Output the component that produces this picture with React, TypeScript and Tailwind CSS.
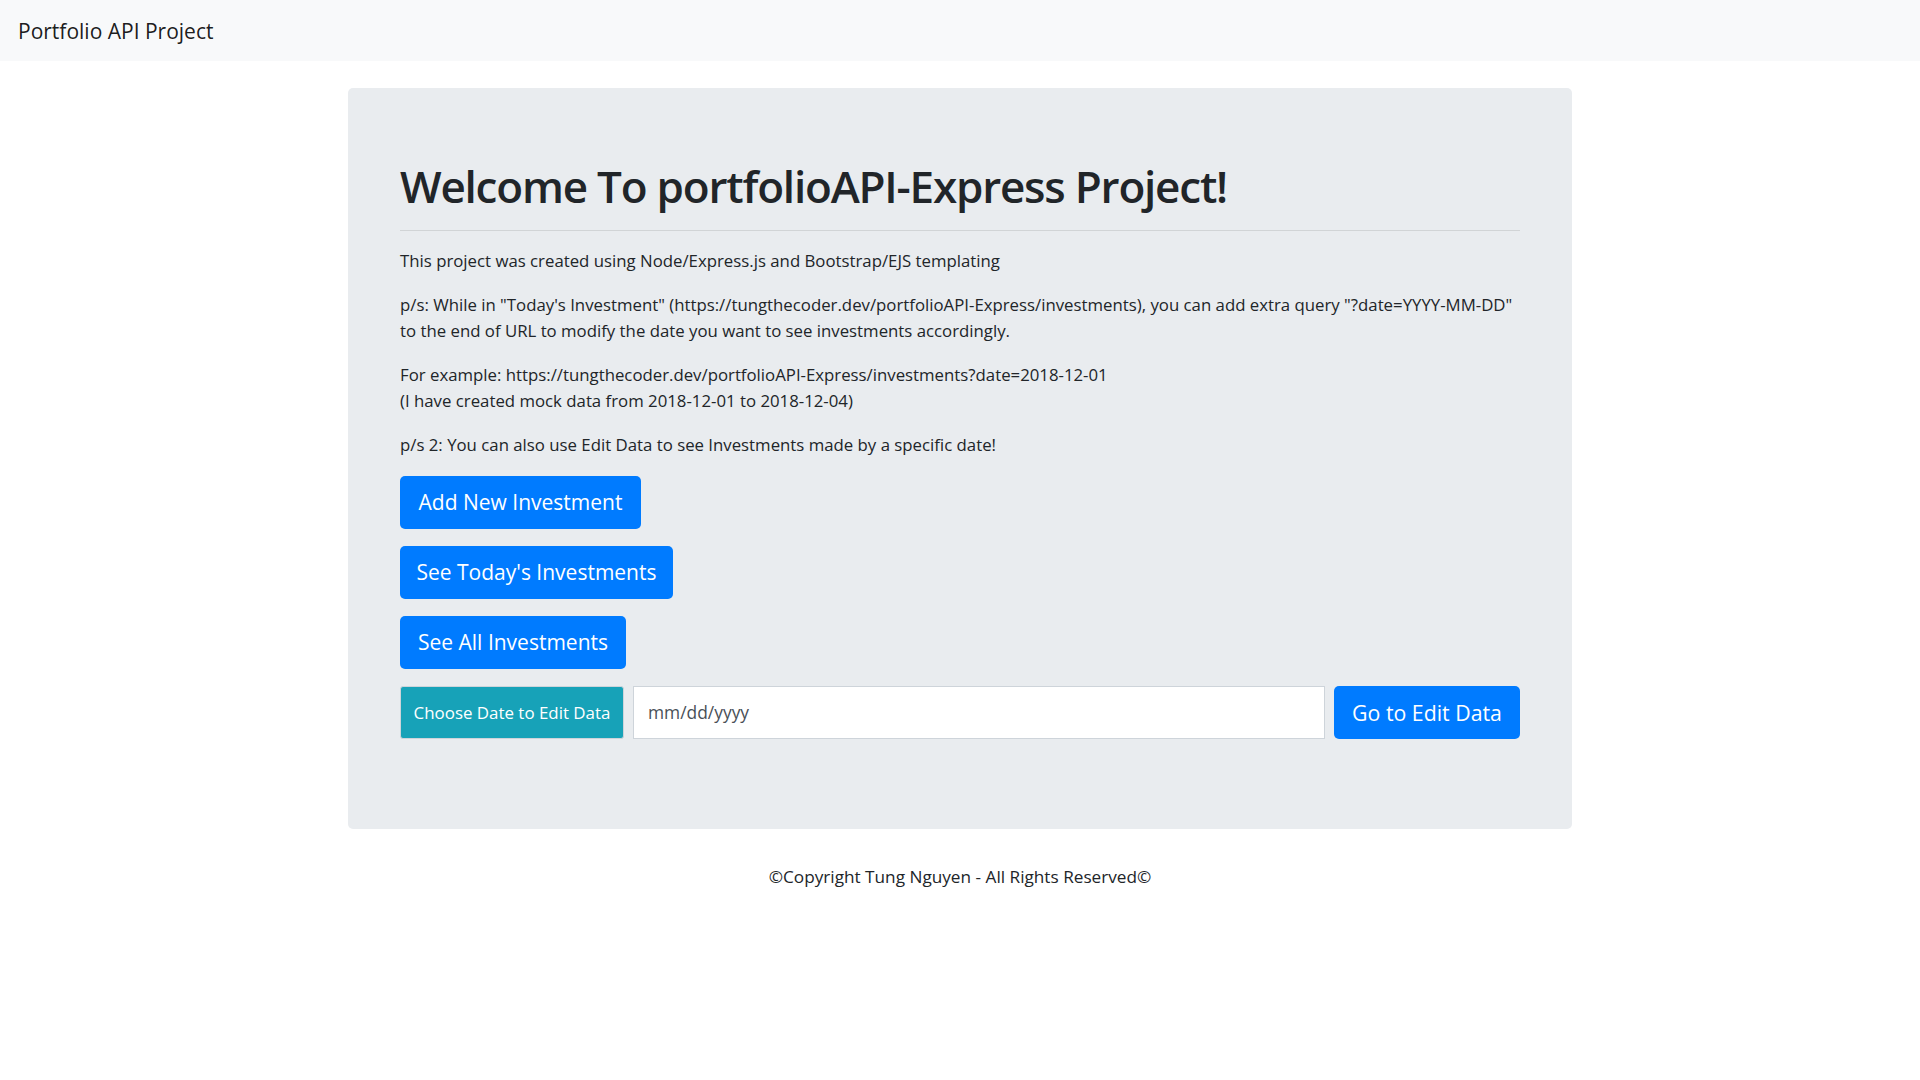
import React from "react";

export default function App() {
  const font = { fontFamily: '"Open Sans", "Noto Sans", sans-serif' };
  return (
    <div className="min-h-screen bg-white text-[#212529]" style={font}>
      <nav className="h-[61px] bg-[#f8f9fa] px-[18px] flex items-center">
        <span className="text-[21px] text-black/90 leading-[33px] pt-[1px]">Portfolio API Project</span>
      </nav>
      <main className="w-[1224px] mx-auto mt-[27px] mb-[35px] rounded-[5px] bg-[#e9ecef] px-[52px] pt-[70px] pb-[90px]">
        <h1 className="text-[44px] font-semibold leading-[57.6px] tracking-[-1.2px]">Welcome To portfolioAPI-Express Project!</h1>
        <hr className="mt-[14px] mb-[17px] border-0 border-t border-black/10" />
        <div className="text-[16.8px] leading-[26.4px]">
          <p className="mb-[17.6px]">This project was created using Node/Express.js and Bootstrap/EJS templating</p>
          <p className="mb-[17.6px]">
            <span className="whitespace-nowrap">p/s: While in "Today's Investment" (https://tungthecoder.dev/portfolioAPI-Express/investments), you can add extra query "?date=YYYY-MM-DD"</span>
            <br />
            to the end of URL to modify the date you want to see investments accordingly.
          </p>
          <p className="mb-[17.6px]">
            For example: https://tungthecoder.dev/portfolioAPI-Express/investments?date=2018-12-01
            <br />
            (I have created mock data from 2018-12-01 to 2018-12-04)
          </p>
          <p className="mb-[17px]">p/s 2: You can also use Edit Data to see Investments made by a specific date!</p>
        </div>
        <div className="flex flex-col items-start gap-[17px]">
          <button className="h-[53px] w-[241px] rounded-[5px] bg-[#007bff] text-white text-[21px] leading-[33px] whitespace-nowrap">Add New Investment</button>
          <button className="h-[53px] w-[273px] rounded-[5px] bg-[#007bff] text-white text-[21px] leading-[33px] whitespace-nowrap">See Today's Investments</button>
          <button className="h-[53px] w-[226px] rounded-[5px] bg-[#007bff] text-white text-[21px] leading-[33px] whitespace-nowrap">See All Investments</button>
          <div className="flex w-full gap-[9px] h-[53px]">
            <div className="w-[224px] h-full flex items-center justify-center bg-[#17a2b8] text-white text-[16.9px] border border-[#ced4da] rounded-[3px] whitespace-nowrap">Choose Date to Edit Data</div>
            <input
              type="text"
              placeholder="mm/dd/yyyy"
              className="flex-1 h-full bg-white border border-[#ced4da] px-[14px] text-[17.4px] text-[#495057] placeholder:text-[#495057] outline-none"
              style={font}
            />
            <button className="h-full w-[186px] rounded-[5px] bg-[#007bff] text-white text-[21.3px] leading-[33px] whitespace-nowrap">Go to Edit Data</button>
          </div>
        </div>
      </main>
      <footer className="text-center text-[17.2px] leading-[26.4px]">©Copyright Tung Nguyen - All Rights Reserved©</footer>
    </div>
  );
}
